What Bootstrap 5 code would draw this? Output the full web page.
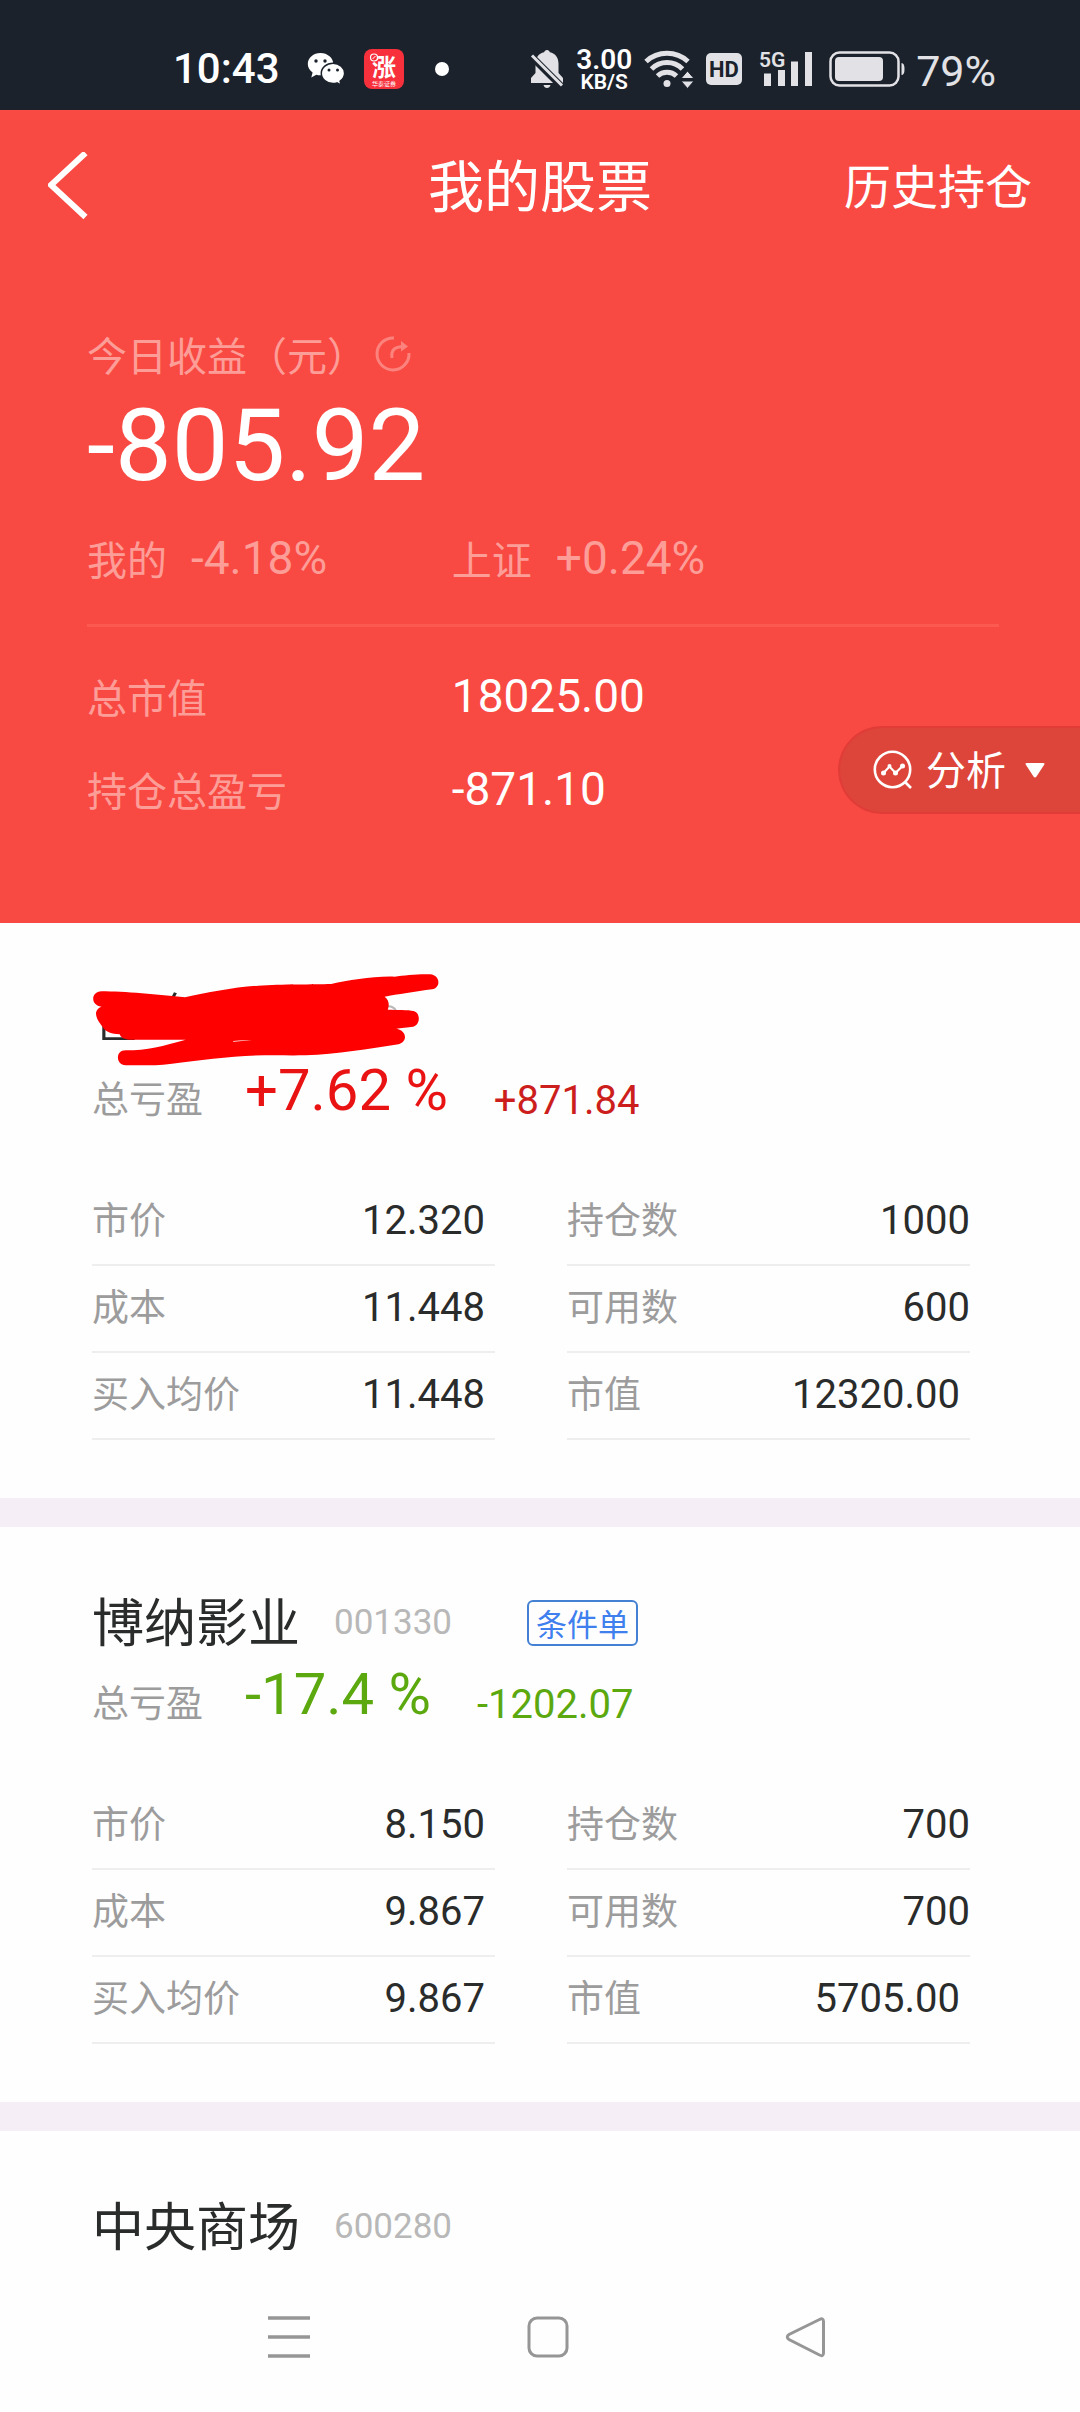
<!DOCTYPE html>
<html lang="zh-CN">
<head>
<meta charset="utf-8">
<meta name="viewport" content="width=device-width, initial-scale=1">
<title>我的股票</title>
<link href="https://cdn.jsdelivr.net/npm/bootstrap@5.3.0/dist/css/bootstrap.min.css" rel="stylesheet">
<style>
  body { font-family: "Noto Sans CJK SC", Roboto, sans-serif; background: #fefefe; color: #2a2b2b; }
  svg { display: block; flex: none; }
  .num { font-family: Roboto, "Noto Sans CJK SC", sans-serif; }
  .bare { background: none; border: 0; padding: 0; color: inherit; }

  /* system status bar */
  .statusbar { background: #1b222c; color: #e2e2e6; height: 110px; padding: 28px 84px 0 173px; }
  .statusbar .clock { font-size: 42px; line-height: 82px; color: #fff; font-weight: 500; }
  .status-left { height: 82px; gap: 19px; }
  .status-left .clock { margin-right: 8px; }
  .status-left .dot { width: 14px; height: 14px; margin-left: 12px; background: #fff; }
  .status-right { height: 82px; gap: 11px; }
  .net-speed { width: 58px; padding-top: 4px; text-align: center; color: #fff; font-weight: 600; font-size: 28px; line-height: 22px; }
  .net-speed span { display: block; font-size: 21px; line-height: 22px; }
  .percent { font-size: 43px; line-height: 78px; padding-top: 4px; }

  /* red summary */
  .summary { background: #f84a43; color: #fff; padding-bottom: 87px; }
  .titlebar { height: 154px; padding: 0 48px; }
  .titlebar h1 { font-size: 56px; line-height: 60px; margin: 0; padding-bottom: 8px; font-weight: 400; }
  .titlebar a { display: block; font-size: 47px; line-height: 60px; padding-bottom: 6px; color: #fff; text-decoration: none; }
  .side { flex: 1 1 0; }
  .overview { padding: 65px 81px 0 87px; }
  .soft { color: #fd9d98; }
  .caption-line { font-size: 40px; line-height: 50px; gap: 8px; }
  .today { font-size: 101px; line-height: 100px; margin-top: 17px; }
  .compare { margin-top: 37px; font-size: 40px; line-height: 50px; }
  .compare .num, .totals .num { font-size: 46px; }
  .pair { gap: 24px; }
  .col-key { flex: 0 0 40%; }
  .rule { border-top: 3px solid #fc5a50; margin: 41px 0 23px; }
  .totals { font-size: 40px; line-height: 93px; }
  .analyse { position: absolute; right: 0; bottom: 109px; width: 242px; height: 88px; padding: 0 0 0 33px; gap: 13px;
    background: #dd453a; border: 2px solid #e13c38; border-right: 0; border-radius: 44px 0 0 44px; color: #fff; font-size: 40px; line-height: 60px; }
  .analyse span { padding-bottom: 4px; }
  .analyse .caret { margin-left: 6px; }

  /* holdings */
  .holding { padding: 63px 110px 58px 92px; }
  .holding + .holding { border-top: 29px solid #f5eef7; }
  .stock-name { font-size: 52px; line-height: 60px; margin: 0; font-weight: 400; }
  .head-line { height: 60px; gap: 34px; }
  .meta { gap: 75px; padding-top: 6px; }
  .code { font-size: 35px; line-height: 50px; color: #b8b8b8; }
  .order-tag { font-size: 31px; line-height: 42px; padding: 0 7px; border: 2px solid #4581d2; border-radius: 6px; color: #3f80ee; }
  .scribble { position: absolute; left: 0; top: -14px; }
  .profit { height: 80px; margin-top: 4px; margin-bottom: 49px; }
  .profit .tag { font-size: 37px; line-height: 60px; padding-top: 14px; color: #9d9c9d; margin-right: 42px; }
  .profit .rate { font-size: 58px; line-height: 80px; margin-right: 46px; }
  .profit .amount { font-size: 40px; line-height: 60px; padding-top: 22px; }
  .up .rate { color: #e91313; } .up .amount { color: #cc1e1c; }
  .down { color: #5ca80f; }
  .figures { column-gap: 72px; }
  .figures dl { flex: 1 1 0; margin: 0; }
  .figures dl > div { height: 87px; border-bottom: 2px solid #eeeeee; line-height: 78px; }
  .figures dt { font-size: 37px; font-weight: 400; color: #9d9c9d; }
  .figures dd { font-size: 40px; margin: 0; padding-top: 3px; }
  .inset { padding-right: 10px; }

  .sysnav { height: 150px; padding: 0 253px 0 268px; color: #969696; }
</style>
</head>
<body>
<div class="d-flex flex-column min-vh-100">

  <div class="statusbar num d-flex justify-content-between">
    <div class="status-left d-flex align-items-center">
      <span class="clock">10:43</span>
      <svg width="38" height="34" viewBox="0 0 38 34" aria-label="WeChat">
        <path fill="#fff" d="M13.500 1C6.500 1 .8 5.800.8 12c0 3.500 1.900 6.500 4.800 8.500L4.300 25.500l5-2.800c1.400.4 2.800.6 4.200.6 7 0 12.800-5 12.800-11.200S20.500 1 13.500 1z"/>
        <path fill="#fff" stroke="#1b222c" stroke-width="1.500" d="M26 11.300c-6.400 0-11.700 4.300-11.700 10S19.600 31.500 26 31.500c1.400 0 2.800-.2 4-.6l4.300 2.300-1.200-4c2.800-1.900 4.500-4.700 4.500-7.900 0-5.700-5.200-10-11.600-10z"/>
        <g fill="#1b222c"><circle cx="9" cy="9" r="1.700"/><circle cx="18" cy="9" r="1.700"/><circle cx="22" cy="18" r="1.500"/><circle cx="30.500" cy="18" r="1.500"/></g>
      </svg>
      <svg width="40" height="40" viewBox="0 0 40 40" aria-label="涨">
        <rect width="40" height="40" rx="8" fill="#f7303c"/>
        <text x="20" y="27" text-anchor="middle" font-family="Noto Sans CJK SC" font-weight="700" font-size="24" fill="#fff">涨</text>
        <circle cx="10" cy="8.500" r="3.500" fill="#f7303c" stroke="#fff" stroke-width="1.200"/><path d="M8.500 10l3-3" stroke="#fff"/>
        <text x="20" y="37" text-anchor="middle" font-family="Noto Sans CJK SC" font-size="6" fill="#fff">华泰证券</text>
      </svg>
      <span class="dot rounded-circle"></span>
    </div>
    <div class="status-right d-flex align-items-center">
      <svg width="34" height="38" viewBox="0 0 34 38" fill="#e2e2e6">
        <path d="M17 0c-1.500 0-2.600 1-2.900 2.300C8.500 3.500 5.500 8 5.500 13.500V23L1 28v5h32v-5l-4.500-5v-9.500c0-5.500-3-10-8.600-11.200C19.600 1 18.500 0 17 0zM13.500 35c.5 2 1.800 3 3.500 3s3-1 3.500-3z"/>
        <path d="M1 6l31 31" stroke="#1b222c" stroke-width="7"/><path d="M2 5.500l30 30" stroke="#e2e2e6" stroke-width="3"/>
      </svg>
      <div class="net-speed">3.00<span>KB/S</span></div>
      <svg width="50" height="40" viewBox="0 0 50 40">
        <g fill="none" stroke="#e2e2e6" stroke-width="5"><path d="M2 12.500a31 31 0 0 1 42 0"/><path d="M7.500 20a22 22 0 0 1 31 0"/><path d="M13.500 27a14 14 0 0 1 19 0"/></g>
        <circle cx="23" cy="34.500" r="3.500" fill="#e2e2e6"/>
        <path fill="#e2e2e6" stroke="#1b222c" stroke-width="1" d="M43.500 22l6.500 7.500H37zM43.500 39.500L37 32h13z"/>
      </svg>
      <svg width="38" height="32" viewBox="0 0 38 32">
        <rect x="1" width="36" height="32" rx="5" fill="#e2e2e6"/>
        <text x="19" y="24" text-anchor="middle" font-family="Roboto" font-weight="700" font-size="22" fill="#1b222c">HD</text>
      </svg>
      <svg width="64" height="40" viewBox="0 0 64 40" fill="#e2e2e6">
        <text x="5" y="18" font-family="Roboto" font-weight="600" font-size="21">5G</text>
        <path d="M10 24.500h7V37h-7zM24 21h7v16h-7zM37 12.500h7V37h-7zM51 3h7v34h-7z"/>
      </svg>
      <svg width="76" height="36" viewBox="0 0 76 36">
        <rect x="1.500" y="1.500" width="68" height="33" rx="9" fill="none" stroke="#e2e2e6" stroke-width="2.500"/>
        <rect x="6" y="6" width="48" height="24" rx="4" fill="#e2e2e6"/>
        <path d="M72.500 12q3 0 3 6t-3 6z" fill="#e2e2e6"/>
      </svg>
      <span class="percent">79%</span>
    </div>
  </div>

  <header class="summary position-relative">
    <nav class="titlebar d-flex align-items-center">
      <div class="side">
        <button type="button" class="bare d-block" aria-label="返回">
          <svg width="40" height="70" viewBox="0 0 40 70"><path d="M37.500 1L3 33l34.500 32" fill="none" stroke="#fff" stroke-width="6"/></svg>
        </button>
      </div>
      <h1>我的股票</h1>
      <div class="side d-flex justify-content-end"><a href="#history">历史持仓</a></div>
    </nav>

    <div class="overview">
      <div class="caption-line soft d-flex align-items-center">
        <span>今日收益（元）</span>
        <svg width="36" height="36" viewBox="0 0 36 36" fill="none" stroke="#fc837d" stroke-width="3">
          <path d="M19 2A16 16 0 1 0 34 17"/><path d="M17 22c-1-7 1.500-11.500 12-11.500"/><path d="M26 5l7 5.500-7 5z" fill="#fc837d" stroke="none"/>
        </svg>
      </div>
      <div class="today num">-805.92</div>
      <div class="compare soft d-flex">
        <div class="col-key d-flex pair"><span>我的</span><span class="num">-4.18%</span></div>
        <div class="d-flex pair"><span>上证</span><span class="num">+0.24%</span></div>
      </div>
      <div class="rule"></div>
      <div class="totals">
        <div class="d-flex"><span class="col-key soft">总市值</span><span class="num">18025.00</span></div>
        <div class="d-flex"><span class="col-key soft">持仓总盈亏</span><span class="num">-871.10</span></div>
      </div>
    </div>

    <button type="button" class="analyse d-flex align-items-center">
      <svg width="40" height="40" viewBox="0 0 40 40" fill="none" stroke="#fff" stroke-width="2.600">
        <circle cx="19.500" cy="19.500" r="17.700"/><path d="M31.500 31.500l6.500 6.500"/>
        <path d="M10.500 23l6-6.500 6 6.500 7-7" stroke-width="2.200"/>
        <g fill="#fff" stroke="none"><circle cx="10.500" cy="23" r="2.500"/><circle cx="16.500" cy="16" r="2"/><circle cx="22.500" cy="23" r="2.500"/><circle cx="29.500" cy="16" r="2.500"/></g>
      </svg>
      <span>分析</span>
      <svg class="caret" width="20" height="15" viewBox="0 0 20 15"><path d="M2 0h16q2.500 0 1 2l-7.500 11.500q-1.500 2-3 0L1 2Q-.5 0 2 0z" fill="#fff"/></svg>
    </button>
  </header>

  <main>
    <section class="holding">
      <div class="head-line position-relative">
        <svg class="scribble" width="348" height="95" viewBox="80 100 880 285" preserveAspectRatio="none">
          <path d="M110 262v38h78M285 176l6-14" fill="none" stroke="#2a2b2b" stroke-width="8"/>
          <path d="M826 203q15-2 22 12" fill="none" stroke="#b8b8b8" stroke-width="6"/>
          <path fill="#f00" d="M104 158C160 158 250 168 315 176C370 162 440 145 500 141C560 136 640 138 685 136C730 125 790 112 845 114C870 110 910 105 935 107C962 110 962 148 940 152C900 158 850 168 820 174C832 185 832 200 828 213C850 214 880 213 893 217C912 222 910 260 892 264C880 266 860 268 850 270C875 275 880 308 855 317C780 330 700 348 620 350C560 351 500 348 440 354C370 360 290 376 240 380L165 380C140 380 138 335 165 335C220 335 260 322 317 303L175 303C160 303 152 295 150 287C130 285 115 280 108 267C98 250 90 240 90 222C92 212 98 206 104 204C76 200 76 160 104 158Z"/>
          <path d="M437 307q20-3 47-2-25 3-47 4z" fill="#fff"/>
        </svg>
      </div>
      <div class="profit up d-flex align-items-center">
        <span class="tag">总亏盈</span><span class="num rate">+7.62 %</span><span class="num amount">+871.84</span>
      </div>
      <div class="figures d-flex">
        <dl>
          <div class="d-flex justify-content-between inset"><dt>市价</dt><dd class="num">12.320</dd></div>
          <div class="d-flex justify-content-between inset"><dt>成本</dt><dd class="num">11.448</dd></div>
          <div class="d-flex justify-content-between inset"><dt>买入均价</dt><dd class="num">11.448</dd></div>
        </dl>
        <dl>
          <div class="d-flex justify-content-between"><dt>持仓数</dt><dd class="num">1000</dd></div>
          <div class="d-flex justify-content-between"><dt>可用数</dt><dd class="num">600</dd></div>
          <div class="d-flex justify-content-between inset"><dt>市值</dt><dd class="num">12320.00</dd></div>
        </dl>
      </div>
    </section>

    <section class="holding">
      <div class="head-line d-flex align-items-center">
        <h2 class="stock-name">博纳影业</h2>
        <div class="meta d-flex align-items-center"><span class="num code">001330</span><button type="button" class="bare order-tag">条件单</button></div>
      </div>
      <div class="profit down d-flex align-items-center">
        <span class="tag">总亏盈</span><span class="num rate">-17.4 %</span><span class="num amount">-1202.07</span>
      </div>
      <div class="figures d-flex">
        <dl>
          <div class="d-flex justify-content-between inset"><dt>市价</dt><dd class="num">8.150</dd></div>
          <div class="d-flex justify-content-between inset"><dt>成本</dt><dd class="num">9.867</dd></div>
          <div class="d-flex justify-content-between inset"><dt>买入均价</dt><dd class="num">9.867</dd></div>
        </dl>
        <dl>
          <div class="d-flex justify-content-between"><dt>持仓数</dt><dd class="num">700</dd></div>
          <div class="d-flex justify-content-between"><dt>可用数</dt><dd class="num">700</dd></div>
          <div class="d-flex justify-content-between inset"><dt>市值</dt><dd class="num">5705.00</dd></div>
        </dl>
      </div>
    </section>

    <section class="holding pb-0">
      <div class="head-line d-flex align-items-center">
        <h2 class="stock-name">中央商场</h2>
        <div class="meta"><span class="num code">600280</span></div>
      </div>
    </section>
  </main>

  <nav class="sysnav mt-auto d-flex justify-content-between align-items-center" aria-label="系统导航">
    <button type="button" class="bare" aria-label="最近任务"><svg width="42" height="42" viewBox="0 0 42 42"><path d="M0 2h42M0 21h42M0 40h42" stroke="currentColor" stroke-width="3.500"/></svg></button>
    <button type="button" class="bare" aria-label="主页"><svg width="42" height="42" viewBox="0 0 42 42"><rect x="2" y="2" width="38" height="38" rx="8" fill="none" stroke="currentColor" stroke-width="3"/></svg></button>
    <button type="button" class="bare" aria-label="返回"><svg width="42" height="42" viewBox="0 0 42 42"><path d="M34.500 3.500L4 18.500q-3.500 2.500 0 5L34.500 39q4 2 4-2V5.500q0-4-4-2z" fill="none" stroke="currentColor" stroke-width="3"/></svg></button>
  </nav>
</div>
<script src="https://cdn.jsdelivr.net/npm/bootstrap@5.3.0/dist/js/bootstrap.bundle.min.js"></script>
</body>
</html>
